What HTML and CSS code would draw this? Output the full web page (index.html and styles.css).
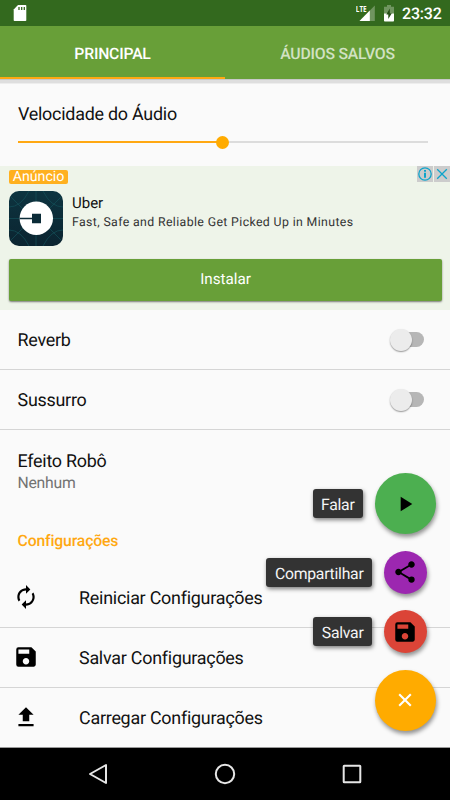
FILE: index.html
```html
<!DOCTYPE html>
<html lang="pt-BR">
<head>
<meta charset="utf-8">
<meta name="viewport" content="width=device-width">
<title>Velocidade do Áudio</title>
<link rel="stylesheet" href="styles.css">
</head>
<body>
<main class="screen">
  <header class="status">
    <svg class="sd" width="14" height="18" viewBox="0 0 14 18"><path fill="#fff" d="M5 1h7.500q.8 0 .8.800v14.400q0 .8-.8.800h-11q-.8 0-.8-.8V5.500z"/><path stroke="#33691e" stroke-width="1.300" d="M6 3v3M8.700 3v3M11.300 3v3"/></svg>
    <div class="status-right">
      <svg width="19" height="18" viewBox="0 0 19 18"><path fill="#709560" d="M18.800 1.500V17H3.500z"/><path fill="#fff" d="M13.800 6.500V17H3.500z"/><path fill="#33691e" d="M0 0h11.500v8H0z"/><text class="lte" x="-.2" y="8.200" textLength="10.800" lengthAdjust="spacingAndGlyphs">LTE</text></svg>
      <svg class="battery" width="10" height="17" viewBox="0 0 10 17"><path fill="#709560" d="M3 0h4v1.700h3v7H0v-7h3z"/><path fill="#fff" d="M0 8.500h10v7.200q0 .8-.8.800H.8q-.8 0-.8-.8z"/><path fill="#234c15" d="M5.800 3.500v4.700h2L4.300 14V9.600h-2z"/></svg>
      <span class="clock">23:32</span>
    </div>
  </header>
  <nav class="tabs"><span class="tab active"><span class="t-main">PRINCIPAL</span></span><span class="tab"><span class="t-saved">ÁUDIOS SALVOS</span></span></nav>
  <section class="speed">
    <div class="label">Velocidade do Áudio</div>
    <div class="slider"><span class="thumb"></span></div>
  </section>
  <section class="ad">
    <div class="ad-tag">Anúncio</div>
    <div class="ad-corner">
      <svg width="16" height="16" viewBox="0 0 16 16"><circle cx="8" cy="8" r="6.200"/><path stroke-width="2" d="M8 6.800v5M8 4v1.800"/></svg>
      <svg width="16" height="16" viewBox="0 0 16 16"><path d="M3.200 3.200l9.600 9.600M12.800 3.200l-9.600 9.600"/></svg>
    </div>
    <div class="ad-info">
      <svg class="ad-logo" width="54" height="55" viewBox="0 0 54 55">
        <defs><linearGradient id="g" x1="0" y1="0" x2="0" y2="1"><stop offset="0" stop-color="#0d3440"/><stop offset="1" stop-color="#0b2430"/></linearGradient></defs>
        <rect width="54" height="55" rx="10" fill="url(#g)"/>
        <g fill="none" stroke="#145059" stroke-width=".7"><path d="M27 0v55M0 27.500h54M0 16Q12 16 20 0M54 16Q42 16 34 0M0 39q12 0 20 16M54 39q-12 0-20 16M2 6l17 17M52 6L35 23M2 49l17-17M52 49L35 32"/></g>
        <circle cx="27.300" cy="27.300" r="16.700" fill="#fff"/><path fill="#0b2b37" d="M10.500 26.700h12.500v-4h9v9.500h-9v-4H10.500z"/>
      </svg>
      <div><div class="ad-name">Uber</div><div class="ad-desc">Fast, Safe and Reliable Get Picked Up in Minutes</div></div>
    </div>
    <div class="install">Instalar</div>
  </section>
  <section class="row"><span class="label reverb">Reverb</span><span class="switch"></span></section>
  <section class="row"><span class="label">Sussurro</span><span class="switch"></span></section>
  <section class="robot"><div class="label">Efeito Robô</div><div class="sub">Nenhum</div></section>
  <h2>Configurações</h2>
  <section class="row action first"><svg width="24" height="24" viewBox="0 0 24 24"><path d="M12 6v3l4-4-4-4v3c-4.420 0-8 3.580-8 8 0 1.570.46 3.030 1.240 4.260L6.700 14.800A5.870 5.870 0 0 1 6 12c0-3.310 2.690-6 6-6zm6.760 1.740L17.300 9.200c.44.840.7 1.790.7 2.800 0 3.310-2.690 6-6 6v-3l-4 4 4 4v-3c4.420 0 8-3.580 8-8 0-1.570-.46-3.030-1.240-4.260z"/></svg><span class="label">Reiniciar Configurações</span></section>
  <section class="row action"><svg width="26" height="26" viewBox="0 0 24 24"><path d="M17 3H5a2 2 0 0 0-2 2v14a2 2 0 0 0 2 2h14c1.100 0 2-.9 2-2V7l-4-4zm-5 16c-1.660 0-3-1.340-3-3s1.340-3 3-3 3 1.340 3 3-1.340 3-3 3zm3-10H5V5h10v4z"/></svg><span class="label">Salvar Configurações</span></section>
  <section class="row action"><svg width="26" height="26" viewBox="0 0 24 24"><path d="M9 16h6v-6h4l-7-7-7 7h4zm-4 2.500h14v2H5z"/></svg><span class="label">Carregar Configurações</span></section>
  <footer class="navbar">
    <svg width="24" height="24" viewBox="0 0 24 24"><path d="M20 3v18L4 12z"/></svg>
    <svg width="24" height="24" viewBox="0 0 24 24"><circle cx="12" cy="12" r="9.200"/></svg>
    <svg width="24" height="24" viewBox="0 0 24 24"><rect x="3.700" y="3.700" width="16.600" height="16.600" rx=".5"/></svg>
  </footer>
  <aside class="fabs">
    <div class="fab-row big"><span class="chip">Falar</span><span class="fab play"><svg width="26" height="26" viewBox="0 0 24 24"><path d="M8 5.200v13.600L18.700 12z"/></svg></span></div>
    <div class="fab-row"><span class="chip">Compartilhar</span><span class="fab share"><svg width="26" height="26" viewBox="0 0 24 24"><path d="M18 16.080c-.76 0-1.440.3-1.960.77L8.910 12.700c.05-.23.09-.46.09-.7s-.04-.47-.09-.7l7.050-4.110c.54.5 1.250.81 2.040.81 1.660 0 3-1.340 3-3s-1.340-3-3-3-3 1.340-3 3c0 .24.04.47.09.7L8.040 9.810A2.990 2.990 0 0 0 6 9c-1.660 0-3 1.340-3 3s1.340 3 3 3c.79 0 1.500-.31 2.040-.81l7.120 4.160c-.05.21-.08.43-.08.65a2.920 2.920 0 1 0 2.920-2.920z"/></svg></span></div>
    <div class="fab-row"><span class="chip">Salvar</span><span class="fab save"><svg width="26" height="26" viewBox="0 0 24 24"><path d="M17 3H5a2 2 0 0 0-2 2v14a2 2 0 0 0 2 2h14c1.100 0 2-.9 2-2V7l-4-4zm-5 16c-1.660 0-3-1.340-3-3s1.340-3 3-3 3 1.340 3 3-1.340 3-3 3zm3-10H5V5h10v4z"/></svg></span></div>
    <div class="fab-row big"><span class="fab close"><svg width="26" height="26" viewBox="0 0 26 26"><path d="M7.200 7.200l11.600 11.600M18.800 7.200L7.200 18.800" stroke="#fff" stroke-width="2.100"/></svg></span></div>
  </aside>
</main>
</body>
</html>
```
FILE: styles.css
```css
* { box-sizing: border-box; }
body { margin: 0; font-family: Roboto, sans-serif; color: #111; text-rendering: geometricPrecision; }
svg { display: block; flex: none; }
.screen { position: relative; width: 450px; height: 800px; overflow: hidden; background: #fafafa; display: flex; flex-direction: column; }
.screen > * { flex: none; }
.status { height: 26px; background: #33691e; display: flex; justify-content: space-between; padding: 4px 8px 0 12.500px; }
.status-right { display: flex; }
.battery { margin: 1px 8.500px 0 9px; }
.lte { font: 700 8.500px "Open Sans", sans-serif; fill: #fff; }
.clock { color: #fff; font-size: 16px; font-weight: 500; line-height: 20px; width: 40px; white-space: nowrap; letter-spacing: -.2px; }
.tabs { height: 53px; background: #689f38; display: flex; box-shadow: 0 1px 0 #c9c9c9, 0 4px 0 #dedede, 0 5px 0 #ededed; position: relative; }
.tab { flex: 1; display: flex; align-items: center; justify-content: center; padding-top: 1px; color: #d2e2c3; font-size: 15.750px; font-weight: 500; letter-spacing: -.2px; }
.tab.active { color: #fff; border-bottom: 2px solid #ffa812; padding-top: 3px; }
.speed { height: 87px; padding: 25px 22px 0 18px; }
.label { font-size: 17.900px; line-height: 22px; white-space: nowrap; letter-spacing: -.24px; }
.slider { height: 2px; margin-top: 15px; background: linear-gradient(to right, #ffa812 0 50%, #dcdcdc 50%); display: flex; align-items: center; justify-content: center; }
.thumb { width: 13px; height: 13px; margin-right: 1px; border-radius: 50%; background: #ffab00; flex: none; }
.ad { height: 144px; background: #eef4e9; padding: 4px 8px 0 9px; position: relative; }
.ad-tag { width: 59px; height: 14px; border-radius: 2px; background: #ffb01f; color: #fff; font-size: 14.200px; line-height: 14px; text-align: center; }
.ad-corner { position: absolute; top: 0; right: 0; display: flex; gap: 1px; }
.ad-corner svg { background: #ccc; fill: none; stroke: #0ea4ca; stroke-width: 1.300; }
.ad-info { display: flex; gap: 9px; margin-top: 7px; }
.ad-name { font-size: 15px; line-height: 18px; margin-top: 3px; }
.ad-desc { font-size: 12.300px; line-height: 16px; margin-top: 3px; color: #333; letter-spacing: .38px; white-space: nowrap; }
.install { height: 42px; margin-top: 13px; border-radius: 2px; background: #689f38; color: #fff; font-size: 15.200px; line-height: 40px; text-align: center; box-shadow: 0 1px 2px rgba(0,0,0,.5); }
.row { height: 60px; border-bottom: 1px solid #d5d5d5; padding: 0 26px 0 17.500px; display: flex; align-items: center; justify-content: space-between; }
.row > .label { padding-top: 2px; }
.switch { width: 31px; height: 15px; margin-left: auto; border-radius: 8px; background: #b6b6b6; display: flex; align-items: center; }
.switch::before { content: ""; width: 22px; height: 22px; margin-left: -3px; border-radius: 50%; background: #ececec; box-shadow: 0 1px 1.500px rgba(0,0,0,.4); flex: none; }
.robot { height: 80px; padding: 21px 17.500px 0; }
.sub { font-size: 15.750px; line-height: 20px; color: #737373; letter-spacing: -.25px; }
h2 { height: 57px; margin: 0; padding: 20px 17.500px 0; font-size: 15.750px; line-height: 22px; font-weight: 500; color: #ffa812; letter-spacing: -.15px; }
.action { justify-content: flex-start; padding-left: 13.500px; }
.action svg { width: 26px; height: 26px; margin: 0 0 0 -.5px; }
.action:not(.first) svg { margin-top: -1px; }
.action .label { margin-left: 40px; padding-top: 2px; }
.action:nth-last-of-type(1) { border-bottom-color: #999; }
.first { height: 61px; }
.first .label { padding-top: 3px; }
.navbar { flex: 1 0 0 !important; background: #000; display: flex; align-items: center; justify-content: center; gap: 103px; }
.navbar svg { fill: none; stroke: #e6e6e6; stroke-width: 2; stroke-linejoin: round; }
.fabs { position: absolute; right: 14px; top: 473px; width: 172px; display: flex; flex-direction: column; align-items: flex-end; gap: 16.500px; }
.fab-row { display: flex; align-items: center; gap: 12px; padding-right: 9px; }
.fab-row.big { padding: 0; }
.chip { height: 29px; border-radius: 3px; background: #333; color: #f5f5f5; font-size: 15.750px; line-height: 31px; padding: 0 8.500px; box-shadow: 1px 2px 4px rgba(0,0,0,.5); white-space: nowrap; letter-spacing: -.25px; }
.fab { width: 43px; height: 43px; border-radius: 50%; display: flex; align-items: center; justify-content: center; box-shadow: 1px 3px 4px rgba(0,0,0,.42); flex: none; }
.fab svg { margin-right: 1px; }
.big .fab { width: 61px; height: 61px; }
.play { background: #4caf50; }
.share { background: #9c27b0; }
.save { background: #db4437; }
.close { background: #ffab00; }
```
